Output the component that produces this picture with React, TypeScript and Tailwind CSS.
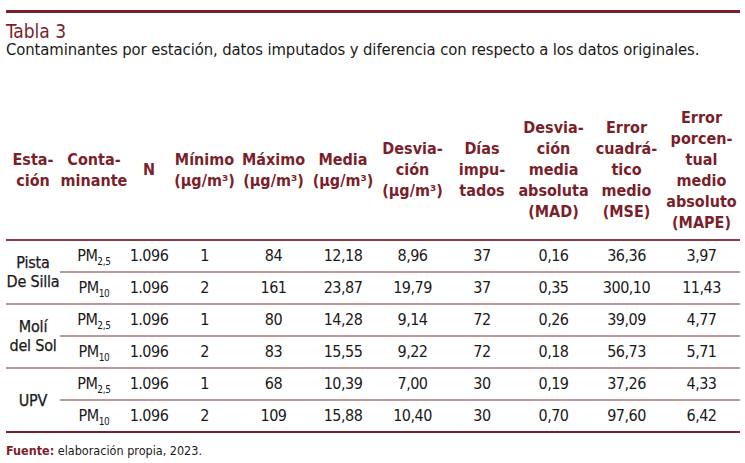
import React from "react";

const RED = "text-[#7a1f2b]";

type Row = {
  pm: "2,5" | "10";
  n: string;
  min: string;
  max: string;
  media: string;
  desv: string;
  dias: string;
  mad: string;
  mse: string;
  mape: string;
};

const stations: { name: React.ReactNode; rows: Row[] }[] = [
  {
    name: (
      <>
        Pista
        <br />
        De Silla
      </>
    ),
    rows: [
      { pm: "2,5", n: "1.096", min: "1", max: "84", media: "12,18", desv: "8,96", dias: "37", mad: "0,16", mse: "36,36", mape: "3,97" },
      { pm: "10", n: "1.096", min: "2", max: "161", media: "23,87", desv: "19,79", dias: "37", mad: "0,35", mse: "300,10", mape: "11,43" },
    ],
  },
  {
    name: (
      <>
        Molí
        <br />
        del Sol
      </>
    ),
    rows: [
      { pm: "2,5", n: "1.096", min: "1", max: "80", media: "14,28", desv: "9,14", dias: "72", mad: "0,26", mse: "39,09", mape: "4,77" },
      { pm: "10", n: "1.096", min: "2", max: "83", media: "15,55", desv: "9,22", dias: "72", mad: "0,18", mse: "56,73", mape: "5,71" },
    ],
  },
  {
    name: <>UPV</>,
    rows: [
      { pm: "2,5", n: "1.096", min: "1", max: "68", media: "10,39", desv: "7,00", dias: "30", mad: "0,19", mse: "37,26", mape: "4,33" },
      { pm: "10", n: "1.096", min: "2", max: "109", media: "15,88", desv: "10,40", dias: "30", mad: "0,70", mse: "97,60", mape: "6,42" },
    ],
  },
];

const headers: React.ReactNode[] = [
  <>Esta-<br />ción</>,
  <>Conta-<br />minante</>,
  <>N</>,
  <>Mínimo<br />(μg/m³)</>,
  <>Máximo<br />(μg/m³)</>,
  <>Media<br />(μg/m³)</>,
  <>Desvia-<br />ción<br />(μg/m³)</>,
  <>Días<br />impu-<br />tados</>,
  <>Desvia-<br />ción<br />media<br />absoluta<br />(MAD)</>,
  <>Error<br />cuadrá-<br />tico<br />medio<br />(MSE)</>,
  <>Error<br />porcen-<br />tual<br />medio<br />absoluto<br />(MAPE)</>,
];

const widths = [
  "w-[54px]",
  "w-[68px]",
  "w-[42px]",
  "w-[69px]",
  "w-[69px]",
  "w-[70px]",
  "w-[69px]",
  "w-[70px]",
  "w-[73px]",
  "w-[73px]",
  "w-[77px]",
];

export default function App() {
  return (
    <div className="w-[745px] h-[463px] bg-white overflow-hidden font-['DejaVu_Sans_Condensed','Roboto',sans-serif] text-[#1a1a1a]">
      <div className="ml-[6px] mr-[5px] mt-[10px] h-[3px] bg-[#7a1f2b]" />
      <div className="ml-[6px] mt-[8px]">
        <div className={`${RED} text-[19px] leading-[20px]`}>Tabla 3</div>
        <div className="text-[16.5px] leading-[18px] tracking-[-0.1px]">
          Contaminantes por estación, datos imputados y diferencia con respecto a los datos originales.
        </div>
      </div>
      <table className="ml-[6px] mt-[41px] w-[734px] border-collapse table-fixed">
        <colgroup>
          {widths.map((w, i) => (
            <col key={i} className={w} />
          ))}
        </colgroup>
        <thead>
          <tr className="h-[140px]">
            {headers.map((h, i) => (
              <th
                key={i}
                className={`${RED} p-0 text-center align-middle font-bold text-[16px] leading-[21px] border-b-2 border-[#8b3a45]`}
              >
                {h}
              </th>
            ))}
          </tr>
        </thead>
        <tbody className="text-[16px] leading-[20px] tracking-[-0.5px]">
          {stations.map((s, si) =>
            s.rows.map((r, ri) => {
              const last = si === stations.length - 1 && ri === 1;
              const border = last
                ? "border-b-2 border-[#7a1f2b]"
                : "border-b-2 border-[#bd969b]";
              const cell = `p-0 text-center align-middle ${border}`;
              return (
                <tr key={`${si}-${ri}`} className="h-[32px]">
                  {ri === 0 && (
                    <td
                      rowSpan={2}
                      className={`p-0 text-center align-middle whitespace-nowrap tracking-[-0.2px] leading-[19px] [-webkit-text-stroke:0.25px_#1a1a1a] ${
                        si === stations.length - 1 ? "border-b-2 border-[#7a1f2b]" : "border-b-2 border-[#bd969b]"
                      }`}
                    >
                      {s.name}
                    </td>
                  )}
                  <td className={cell}>
                    PM<sub className="text-[10px] bottom-[-4px] tracking-[-0.3px]">{r.pm}</sub>
                  </td>
                  <td className={cell}>{r.n}</td>
                  <td className={cell}>{r.min}</td>
                  <td className={cell}>{r.max}</td>
                  <td className={cell}>{r.media}</td>
                  <td className={cell}>{r.desv}</td>
                  <td className={cell}>{r.dias}</td>
                  <td className={cell}>{r.mad}</td>
                  <td className={cell}>{r.mse}</td>
                  <td className={cell}>{r.mape}</td>
                </tr>
              );
            })
          )}
        </tbody>
      </table>
      <div className="ml-[6px] mt-[11px] text-[12.5px] leading-[14px]">
        <span className={`${RED} font-bold`}>Fuente:</span> elaboración propia, 2023.
      </div>
    </div>
  );
}
